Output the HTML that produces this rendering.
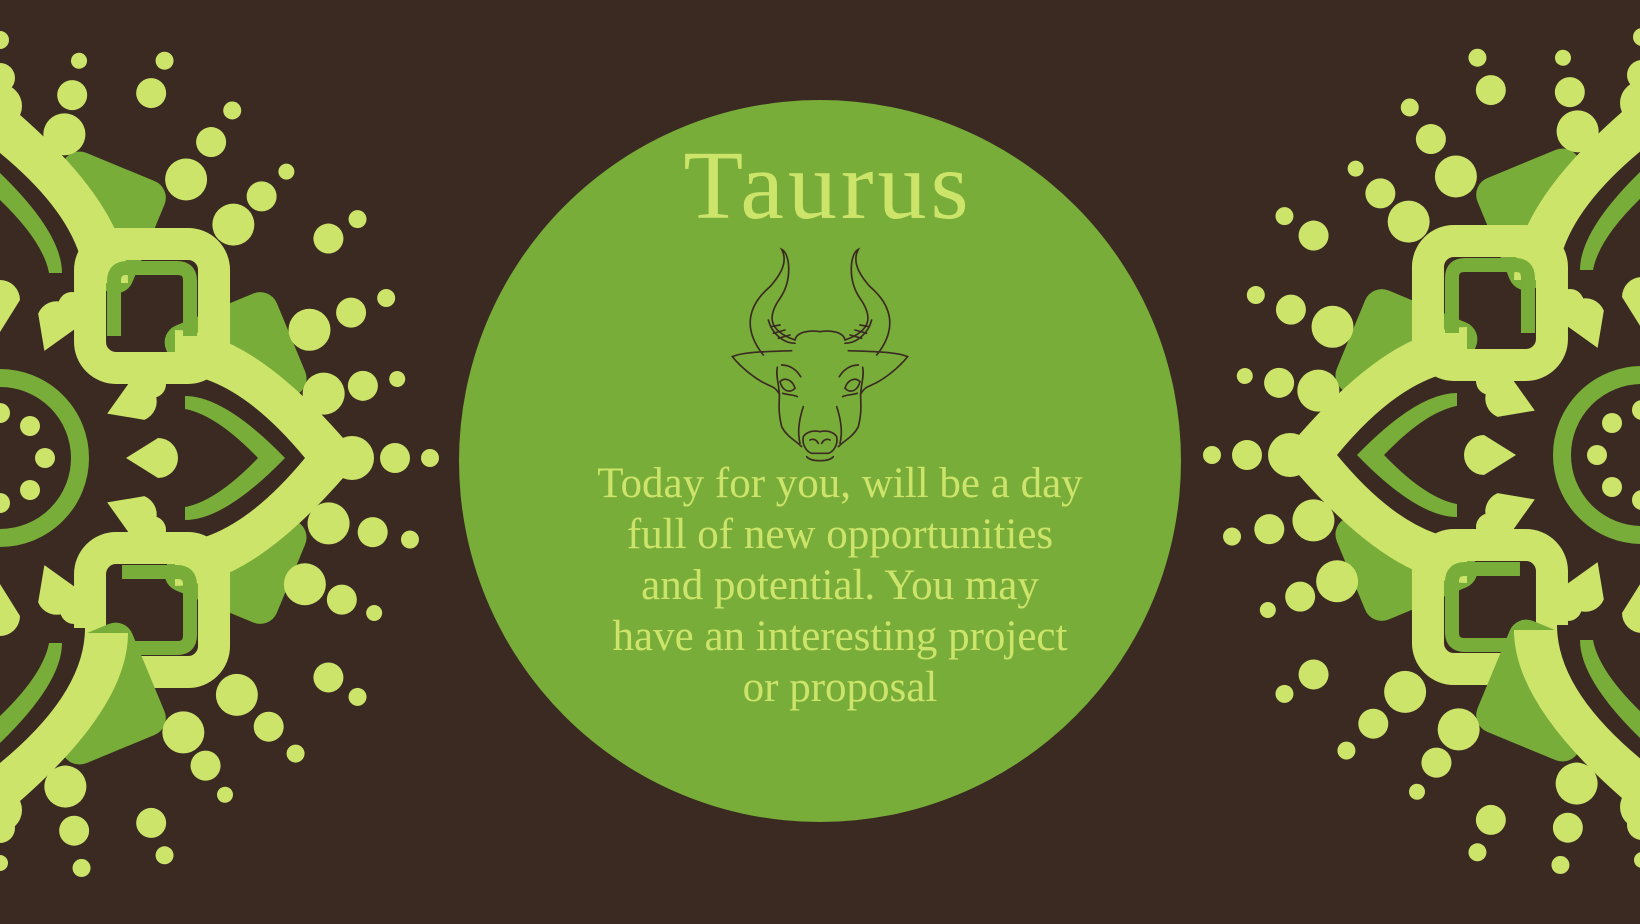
<!DOCTYPE html>
<html><head><meta charset="utf-8"><style>
html,body{margin:0;padding:0;}
body{width:1640px;height:924px;background:#3a2a22;position:relative;overflow:hidden;font-family:"Liberation Serif",serif;}
svg.m{position:absolute;left:0;top:0;}
.circle{position:absolute;left:459px;top:100px;width:722px;height:722px;border-radius:50%;background:#79ad39;}
h1{position:absolute;margin:0;left:578px;width:500px;top:130px;font-size:98px;letter-spacing:4px;font-weight:normal;color:#cde46a;text-align:center;}
.p{position:absolute;left:490px;width:700px;top:458px;font-size:43px;line-height:51px;text-align:center;color:#cde46a;}
</style></head><body>
<svg class="m" width="1640" height="924" viewBox="0 0 1640 924">
<defs>
<g id="sec">
  <g transform="rotate(22.5) translate(255,0)"><rect x="-60" y="-55" width="120" height="110" rx="18" fill="#79ad39"/></g>
  <g transform="rotate(-22.5) translate(255,0)"><rect x="-60" y="-55" width="120" height="110" rx="18" fill="#79ad39"/></g>
  <path d="M175 -128 Q255 -128 360 0 Q255 128 175 128 Z" fill="#cde46a"/>
  <path d="M170 -85 Q235 -85 305 0 Q235 85 170 85 Z" fill="#3a2a22"/>
  <path d="M185 -62 Q225 -62 285 0 Q225 62 185 62 Z" fill="#79ad39"/>
  <path d="M175 -50 Q210 -50 258 0 Q210 50 175 50 Z" fill="#3a2a22"/>
  <circle cx="352" cy="0" r="22" fill="#cde46a"/>
  <g transform="rotate(45) translate(215,0) rotate(-45)">
    <rect x="-62" y="-62" width="124" height="124" rx="26" fill="none" stroke="#cde46a" stroke-width="32"/>
    <path d="M-30 -38 L25 -38 Q38 -38 38 -25 L38 25 Q38 38 25 38 L-30 38" fill="none" stroke="#79ad39" stroke-width="14"/>
    <circle cx="-78" cy="0" r="14" fill="#cde46a"/><circle cx="0" cy="-80" r="14" fill="#cde46a"/>
  </g>
  <g transform="translate(150,0)"><path d="M-24 0 L8 -20 A20 20 0 1 1 8 20 Z" fill="#cde46a"/></g>
  <g transform="rotate(22.5) translate(140,0)"><path d="M-24 0 L8 -20 A20 20 0 1 1 8 20 Z" fill="#cde46a"/></g>
  <g transform="rotate(-22.5) translate(140,0)"><path d="M-24 0 L8 -20 A20 20 0 1 1 8 20 Z" fill="#cde46a"/></g>
</g>
<g id="dots">
  <circle cx="395" cy="0" r="15" fill="#cde46a"/><circle cx="430" cy="0" r="9" fill="#cde46a"/>
  <g transform="rotate(11.25)"><circle cx="335" cy="0" r="21" fill="#cde46a"/><circle cx="380" cy="0" r="15" fill="#cde46a"/><circle cx="418" cy="0" r="9" fill="#cde46a"/></g>
  <g transform="rotate(22.5)"><circle cx="330" cy="0" r="21" fill="#cde46a"/><circle cx="370" cy="0" r="15" fill="#cde46a"/><circle cx="405" cy="0" r="8" fill="#cde46a"/></g>
</g>
<g id="mandala">
  <use href="#sec"/><use href="#sec" transform="rotate(90)"/><use href="#sec" transform="rotate(180)"/><use href="#sec" transform="rotate(270)"/>
  <use href="#dots"/><use href="#dots" transform="rotate(33.75)"/><use href="#dots" transform="rotate(67.5)"/><use href="#dots" transform="rotate(-33.75)"/><use href="#dots" transform="rotate(-67.5)"/><use href="#dots" transform="rotate(101.25)"/><use href="#dots" transform="rotate(-101.25)"/>
  <circle r="80" fill="none" stroke="#79ad39" stroke-width="18"/>
  <circle cx="45" cy="0" r="10" fill="#cde46a"/><circle cx="30" cy="-32" r="10" fill="#cde46a"/><circle cx="30" cy="32" r="10" fill="#cde46a"/>
  <circle cx="0" cy="-45" r="10" fill="#cde46a"/><circle cx="0" cy="45" r="10" fill="#cde46a"/>
</g>
</defs>
<use href="#mandala" transform="translate(0,458)"/>
<use href="#mandala" transform="translate(1642,455) scale(-1,1)"/>
</svg>
<div class="circle"></div>
<h1>Taurus</h1>
<svg style="position:absolute;left:700px;top:230px" width="220" height="240" viewBox="0 0 660 720">
<g fill="none" stroke="#3a2a22" stroke-width="5" stroke-linecap="round">
<g id="half">
<path d="M190 375 C130 300 140 230 210 170 C250 125 262 90 245 58 C270 70 278 150 240 205 C205 255 200 300 285 330"/>
<path d="M205 270 C215 310 250 340 285 340"/>
<path d="M212 290 L240 285 M220 310 L255 300 M235 325 L270 315"/>
<path d="M285 330 C290 305 330 300 360 305"/>
<path d="M275 362 C200 365 130 365 97 380 C125 415 170 450 205 465 C215 470 225 470 238 492"/>
<path d="M232 412 C226 440 240 470 238 505 C236 540 238 560 245 590 C260 620 285 630 305 650"/>
<path d="M245 405 C270 405 290 420 302 440"/>
<path d="M240 455 C255 440 278 450 285 475 C270 490 248 485 240 455 Z"/>
<path d="M248 490 C265 495 285 495 292 500"/>
<path d="M310 530 C300 560 290 600 300 640"/>
<path d="M360 605 C340 600 320 605 310 620 C305 645 320 665 335 670 L360 670"/>
<path d="M330 630 C340 625 350 630 355 640"/>
<path d="M320 680 C330 692 350 692 360 692"/>
</g>
<use href="#half" transform="translate(720,0) scale(-1,1)"/>
</g>
</svg>
<div class="p">Today for you, will be a day<br>full of new opportunities<br>and potential. You may<br>have an interesting project<br>or proposal</div>
</body></html>
